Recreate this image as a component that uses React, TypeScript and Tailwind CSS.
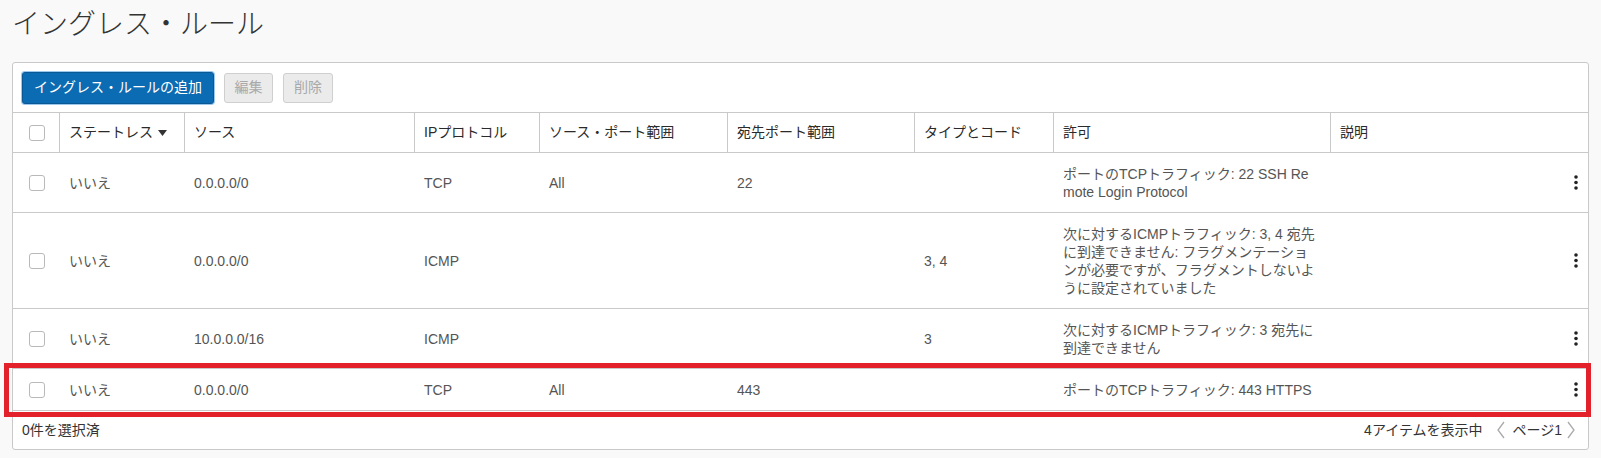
const FONT = "font-['Liberation_Sans','Noto_Sans_CJK_JP',sans-serif]";

const cols = [
  { w: "w-[46px]", label: "" },
  { w: "w-[125px]", label: "ステートレス" },
  { w: "w-[230px]", label: "ソース" },
  { w: "w-[125px]", label: "IPプロトコル" },
  { w: "w-[188px]", label: "ソース・ポート範囲" },
  { w: "w-[187px]", label: "宛先ポート範囲" },
  { w: "w-[139px]", label: "タイプとコード" },
  { w: "w-[277px]", label: "許可" },
  { w: "flex-1", label: "説明" },
];

interface Rule {
  stateless: string;
  source: string;
  protocol: string;
  srcPort: string;
  dstPort: string;
  typeCode: string;
  allows: string;
  highlight?: boolean;
}

const rules: Rule[] = [
  {
    stateless: "いいえ",
    source: "0.0.0.0/0",
    protocol: "TCP",
    srcPort: "All",
    dstPort: "22",
    typeCode: "",
    allows: "ポートのTCPトラフィック: 22 SSH Remote Login Protocol",
  },
  {
    stateless: "いいえ",
    source: "0.0.0.0/0",
    protocol: "ICMP",
    srcPort: "",
    dstPort: "",
    typeCode: "3, 4",
    allows:
      "次に対するICMPトラフィック: 3, 4 宛先に到達できません: フラグメンテーションが必要ですが、フラグメントしないように設定されていました",
  },
  {
    stateless: "いいえ",
    source: "10.0.0.0/16",
    protocol: "ICMP",
    srcPort: "",
    dstPort: "",
    typeCode: "3",
    allows: "次に対するICMPトラフィック: 3 宛先に到達できません",
  },
  {
    stateless: "いいえ",
    source: "0.0.0.0/0",
    protocol: "TCP",
    srcPort: "All",
    dstPort: "443",
    typeCode: "",
    allows: "ポートのTCPトラフィック: 443 HTTPS",
    highlight: true,
  },
];

const Checkbox = () => (
  <span className="block w-4 h-4 rounded-[3px] border border-[#b9b9b9] bg-white" />
);

const Kebab = () => (
  <svg width="4" height="15" viewBox="0 0 4 15" className="block">
    <circle cx="2" cy="2" r="1.8" fill="#222" />
    <circle cx="2" cy="7.5" r="1.8" fill="#222" />
    <circle cx="2" cy="13" r="1.8" fill="#222" />
  </svg>
);

const Row: React.FC<{ rule: Rule }> = ({ rule }) => {
  const cells = [
    rule.stateless,
    rule.source,
    rule.protocol,
    rule.srcPort,
    rule.dstPort,
    rule.typeCode,
  ];
  return (
    <div className="relative flex items-center border-b border-[#c9c9c9] text-[14px] leading-[18px] text-[#555]">
      <div className={`${cols[0].w} flex justify-center pl-[1px]`}>
        <Checkbox />
      </div>
      {cells.map((c, i) => (
        <div key={i} className={`${cols[i + 1].w} pl-[10px]`}>
          {c}
        </div>
      ))}
      <div className={`${cols[7].w} pl-[10px] pr-[10px] py-[11.5px] break-all`}>
        {rule.allows}
      </div>
      <div className="flex-1 flex justify-end pr-[10px]">
        <Kebab />
      </div>
      {rule.highlight && (
        <div className="absolute -left-[9px] -right-[3px] -top-[6px] -bottom-[7px] border-[5px] border-[#e3212b] pointer-events-none" />
      )}
    </div>
  );
};

export default function App() {
  return (
    <div className={`${FONT} min-h-[458px] w-full bg-[#f9f9f9] px-3`}>
      <h1 className="pt-[10px] pb-[23px] text-[28px] leading-[29px] font-light text-[#333]">
        イングレス・ルール
      </h1>
      <div className="border border-[#c9c9c9] rounded-[3px] bg-white">
        <div className="flex items-center gap-[10px] px-[9px] h-[50px] border-b border-[#c9c9c9]">
          <button className="h-[32px] px-[11px] rounded-[3px] bg-[#0b6bb3] border border-[#0a5996] shadow-[0_0_0_1px_#9cc6ea] text-white text-[14px]">
            イングレス・ルールの追加
          </button>
          <button className="h-[30px] w-[49px] rounded-[3px] bg-[#ebebeb] border border-[#cfcfcf] text-[#a9a9a9] text-[14px]">
            編集
          </button>
          <button className="h-[30px] w-[50px] rounded-[3px] bg-[#ebebeb] border border-[#cfcfcf] text-[#a9a9a9] text-[14px]">
            削除
          </button>
        </div>
        <div className="flex h-[40px] items-stretch border-b border-[#c9c9c9] text-[14px] text-[#2a2a2a]">
          <div className={`${cols[0].w} flex items-center justify-center pl-[1px]`}>
            <Checkbox />
          </div>
          {cols.slice(1).map((c, i) => (
            <div
              key={i}
              className={`${c.w} flex items-center gap-[5px] pl-[9px] border-l border-[#c9c9c9]`}
            >
              {c.label}
              {i === 0 && (
                <svg width="9" height="6" viewBox="0 0 9 6">
                  <path d="M0 0h9L4.5 6z" fill="#333" />
                </svg>
              )}
            </div>
          ))}
        </div>
        {rules.map((r, i) => (
          <Row key={i} rule={r} />
        ))}
        <div className="flex items-center justify-between h-[38px] pl-[9px] pr-[12px] text-[14px] text-[#333]">
          <span>0件を選択済</span>
          <div className="flex items-center">
            <span>4アイテムを表示中</span>
            <svg width="10" height="18" viewBox="0 0 10 18" className="ml-[14px] mr-[6px]">
              <path d="M8 1L2 9l6 8" stroke="#aaa" strokeWidth="1.3" fill="none" />
            </svg>
            <span>ページ1</span>
            <svg width="10" height="18" viewBox="0 0 10 18" className="ml-[4px]">
              <path d="M2 1l6 8-6 8" stroke="#aaa" strokeWidth="1.3" fill="none" />
            </svg>
          </div>
        </div>
      </div>
    </div>
  );
}
